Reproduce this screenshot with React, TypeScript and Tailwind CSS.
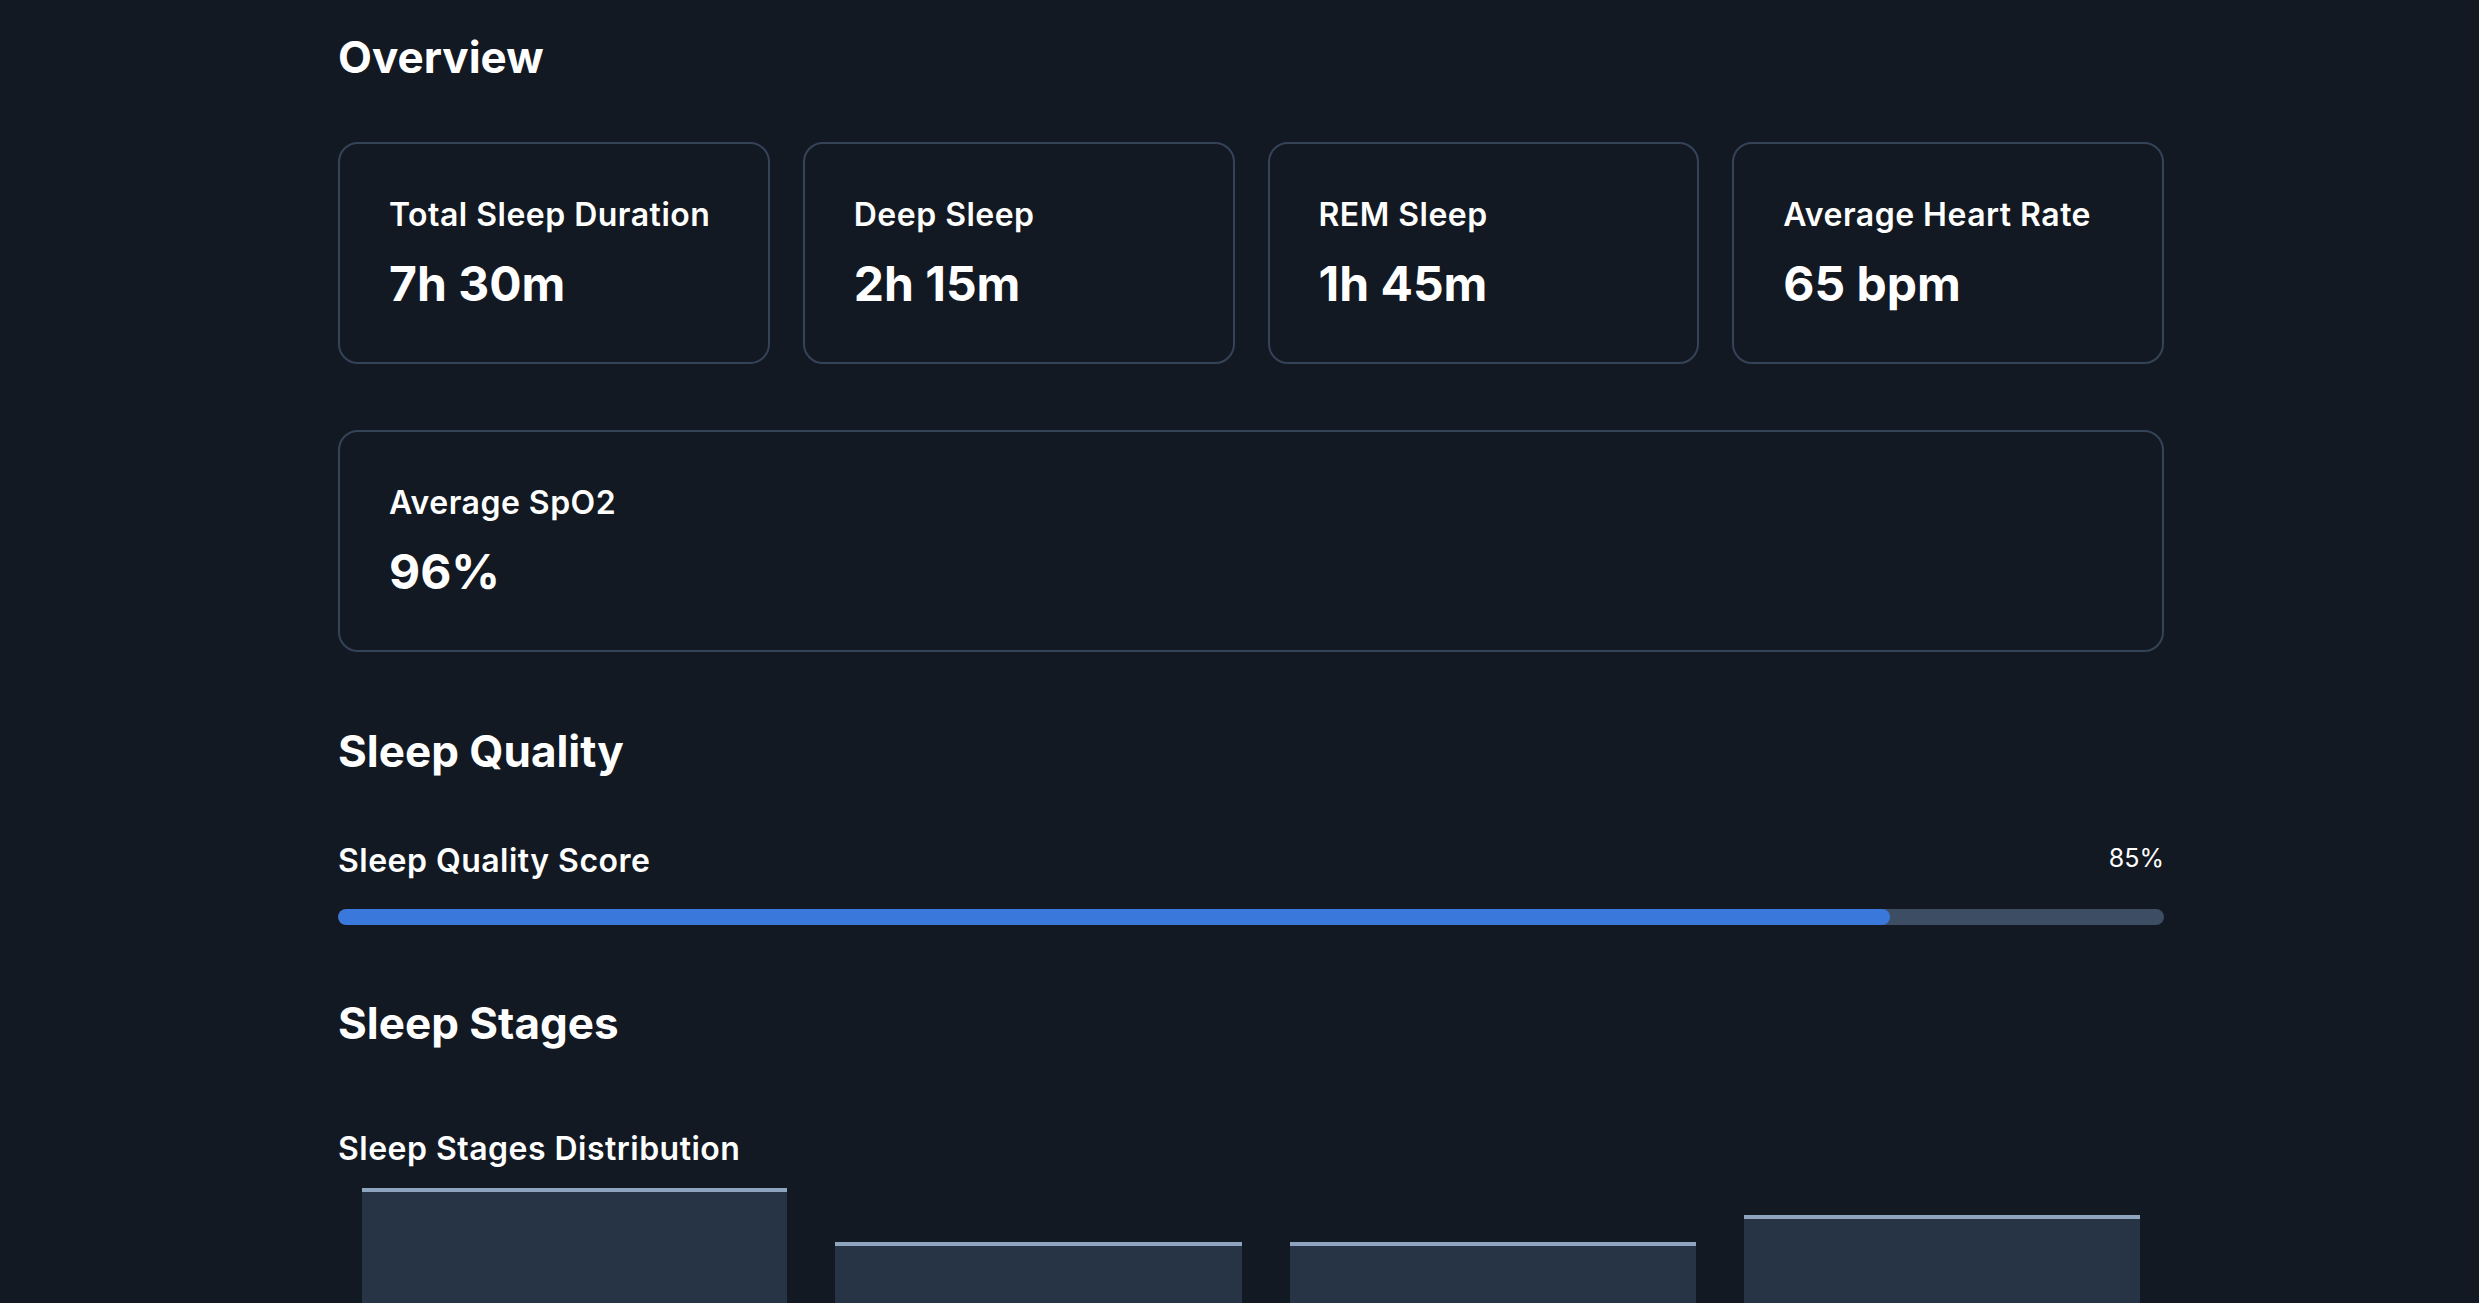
import React from "react";

const stats = [
  { label: "Total Sleep Duration", value: "7h 30m" },
  { label: "Deep Sleep", value: "2h 15m" },
  { label: "REM Sleep", value: "1h 45m" },
  { label: "Average Heart Rate", value: "65 bpm" },
];

const stages = [
  { name: "Light", width: "w-[425px]", height: "h-[279px]" },
  { name: "Deep", width: "w-[407px]", height: "h-[225px]" },
  { name: "REM", width: "w-[406px]", height: "h-[225px]" },
  { name: "Awake", width: "w-[396px]", height: "h-[252px]" },
];

function StatCard({ label, value }: { label: string; value: string }) {
  return (
    <div className="h-[222px] rounded-[20px] border-2 border-[#354359] px-[49px] pt-[53px]">
      <div className="text-[32px] leading-[36px] font-semibold tracking-[0.015em] text-white">{label}</div>
      <div className="mt-[22px] text-[48px] leading-[58px] font-bold text-white">{value}</div>
    </div>
  );
}

export default function App() {
  const score = 85;

  return (
    <div className="h-[1303px] overflow-hidden bg-[#131922] font-['Inter','Liberation_Sans',sans-serif] text-white">
      <div className="ml-[338px] w-[1826px] pt-[30px]">
        {/* Overview */}
        <h2 className="text-[44px] leading-[55px] font-bold">Overview</h2>
        <div className="mt-[57px] grid grid-cols-4 gap-[33px]">
          {stats.map((s) => (
            <StatCard key={s.label} label={s.label} value={s.value} />
          ))}
        </div>
        <div className="mt-[66px]">
          <StatCard label="Average SpO2" value="96%" />
        </div>

        {/* Sleep quality */}
        <h2 className="mt-[72px] text-[44px] leading-[55px] font-bold">Sleep Quality</h2>
        <div className="mt-[64px] flex items-start justify-between">
          <span className="text-[32px] leading-[36px] font-semibold tracking-[0.015em]">Sleep Quality Score</span>
          <span className="text-[25px] leading-[30px]">{score}%</span>
        </div>
        <div className="mt-[30px] h-4 w-full overflow-hidden rounded-full bg-[#3c4d64]">
          <div className="h-full rounded-full bg-[#3b78dc]" style={{ width: `${score}%` }} />
        </div>

        {/* Sleep stages */}
        <h2 className="mt-[71px] text-[44px] leading-[55px] font-bold">Sleep Stages</h2>
        <div className="mt-[80px] text-[32px] leading-[36px] font-semibold tracking-[0.015em]">
          Sleep Stages Distribution
        </div>
        <div className="flex h-[300px] items-end gap-[48px] pl-[24px]">
          {stages.map((st) => (
            <div
              key={st.name}
              className={`${st.width} ${st.height} border-t-4 border-[#8fa4bf] bg-[#273446]`}
            />
          ))}
        </div>
      </div>
    </div>
  );
}
